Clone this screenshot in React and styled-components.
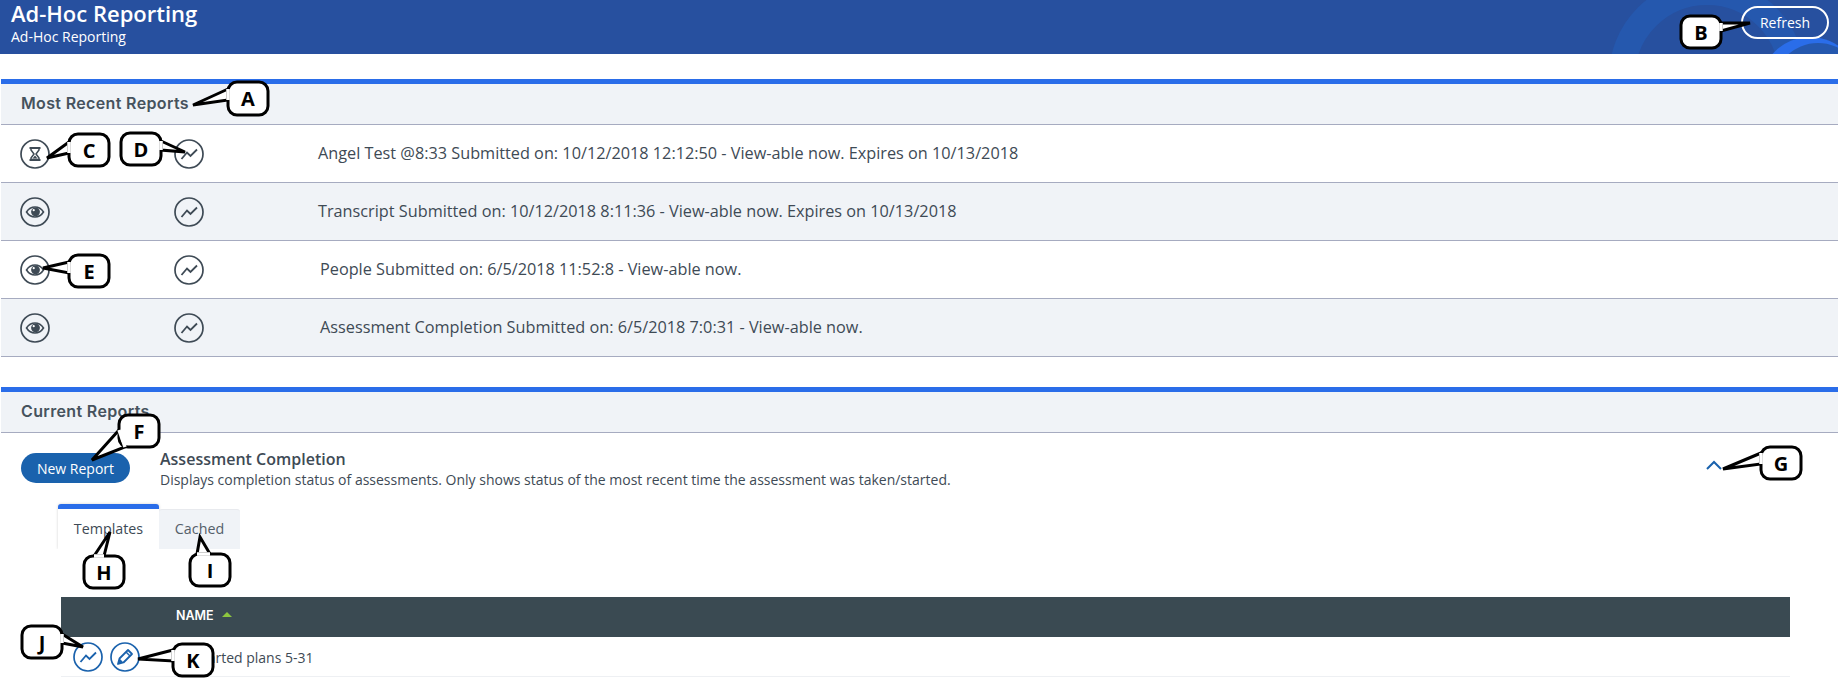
import styled, { createGlobalStyle } from "styled-components";

const GlobalStyle = createGlobalStyle`
  html, body {
    margin: 0;
    padding: 0;
    background: #fff;
    font-family: "Open Sans", "Liberation Sans", sans-serif;
    color: #3e4a55;
    overflow: hidden;
  }
  * { box-sizing: border-box; }
`;

const recent = [
  { id: 1, pending: true, text: "Angel Test @8:33 Submitted on: 10/12/2018 12:12:50 - View-able now. Expires on 10/13/2018" },
  { id: 2, text: "Transcript Submitted on: 10/12/2018 8:11:36 - View-able now. Expires on 10/13/2018" },
  { id: 3, inset: true, text: "People Submitted on: 6/5/2018 11:52:8 - View-able now." },
  { id: 4, inset: true, text: "Assessment Completion Submitted on: 6/5/2018 7:0:31 - View-able now." },
];

// x, y, w, h = bubble, tip = end of the pointer, base = where it leaves the bubble
const callouts = [
  { l: "A", x: 228, y: 82, w: 40, h: 33, tip: [193, 105], base: [[228, 89], [228, 100]] },
  { l: "B", x: 1681, y: 16, w: 40, h: 32, tip: [1750, 23], base: [[1721, 23], [1721, 31]] },
  { l: "C", x: 69, y: 134, w: 40, h: 32, tip: [47, 158], base: [[69, 142], [69, 153]] },
  { l: "D", x: 121, y: 133, w: 40, h: 32, tip: [185, 152], base: [[161, 141], [161, 150]] },
  { l: "E", x: 69, y: 255, w: 40, h: 32, tip: [43, 268], base: [[69, 262], [69, 273]] },
  { l: "F", x: 119, y: 415, w: 40, h: 32, tip: [92, 460], base: [[119, 430], [125, 447]] },
  { l: "G", x: 1761, y: 447, w: 40, h: 32, tip: [1723, 469], base: [[1761, 453], [1761, 464]] },
  { l: "H", x: 84, y: 556, w: 40, h: 32, tip: [110, 532], base: [[94, 556], [104, 556]] },
  { l: "I", x: 190, y: 554, w: 40, h: 32, tip: [200, 537], base: [[197, 554], [210, 554]] },
  { l: "J", x: 22, y: 626, w: 40, h: 32, tip: [83, 647], base: [[62, 634], [62, 643]] },
  { l: "K", x: 173, y: 644, w: 40, h: 32, tip: [138, 659], base: [[173, 650], [173, 661]] },
];

function Ring() {
  return <circle cx="15" cy="15" r="14" fill="none" stroke="currentColor" strokeWidth="1.7" />;
}

function HourglassIcon() {
  return (
    <svg viewBox="0 0 30 30" width="30" height="30">
      <Ring />
      <path d="M9.500 9h11M9.500 21h11" stroke="currentColor" strokeWidth="2" />
      <path d="M11 9.500v1.500l3 4-3 4v1.500h8V19l-3-4 3-4V9.500" fill="none" stroke="currentColor" strokeWidth="1.500" />
      <path d="M12.500 19.500l2.500-3 2.500 3z" fill="currentColor" />
    </svg>
  );
}

function EyeIcon() {
  return (
    <svg viewBox="0 0 30 30" width="30" height="30">
      <Ring />
      <path d="M6.500 15c2.200-3.400 5-5 8.500-5s6.300 1.600 8.500 5c-2.200 3.400-5 5-8.500 5s-6.300-1.600-8.500-5z" fill="none" stroke="currentColor" strokeWidth="1.600" />
      <circle cx="15.500" cy="14.800" r="4.400" fill="currentColor" />
      <circle cx="13.700" cy="13.200" r="1.100" fill="#fff" />
    </svg>
  );
}

function ChartIcon() {
  return (
    <svg viewBox="0 0 30 30" width="30" height="30">
      <Ring />
      <path d="M7.500 20l5.500-6.500 3.500 3.500 6.500-6.500" fill="none" stroke="currentColor" strokeWidth="1.800" />
    </svg>
  );
}

function PencilIcon() {
  return (
    <svg viewBox="0 0 30 30" width="30" height="30">
      <Ring />
      <path d="M8 22l1.500-5.500 8.500-8.500 4 4-8.500 8.500z" fill="none" stroke="currentColor" strokeWidth="1.800" strokeLinejoin="round" />
      <path d="M8 22l1.500-5.500 4 4z" fill="currentColor" />
      <path d="M16 10l4 4" stroke="currentColor" strokeWidth="1.500" />
    </svg>
  );
}

function Callout({ l, x, y, w, h, tip, base }) {
  const pad = 3;
  const px = (v) => v - x + pad;
  const py = (v) => v - y + pad;
  const pts = `${px(base[0][0])},${py(base[0][1])} ${px(tip[0])},${py(tip[1])} ${px(base[1][0])},${py(base[1][1])}`;
  return (
    <Bubble $x={x - pad} $y={y - pad} $w={w + pad * 2} $h={h + pad * 2}>
      <svg width={w + pad * 2} height={h + pad * 2}>
        <polygon points={pts} fill="#fff" stroke="#000" strokeWidth="3" strokeLinejoin="miter" />
        <rect x={pad} y={pad} width={w} height={h} rx="9" fill="#fff" stroke="#000" strokeWidth="3" />
        <line x1={px(base[0][0])} y1={py(base[0][1])} x2={px(base[1][0])} y2={py(base[1][1])} stroke="#fff" strokeWidth="3.500" />
      </svg>
      <BubbleLetter>{l}</BubbleLetter>
    </Bubble>
  );
}

export default function App() {
  return (
    <Page>
      <GlobalStyle />
      <Banner>
        <Rings viewBox="0 0 248 54" width="248" height="54">
          <circle cx="117" cy="77" r="85" fill="none" stroke="#2558ae" strokeWidth="26" />
          <circle cx="220" cy="87" r="50" fill="#2a6de9" />
          <circle cx="228" cy="88" r="45" fill="#2558ae" />
        </Rings>
        <BannerText>
          <BannerTitle>Ad-Hoc Reporting</BannerTitle>
          <BannerSub>Ad-Hoc Reporting</BannerSub>
        </BannerText>
        <RefreshButton>Refresh</RefreshButton>
      </Banner>

      <Section $top={25}>
        <SectionHead>Most Recent Reports</SectionHead>
        {recent.map((r) => (
          <ReportRow key={r.id}>
            <IconCell>{r.pending ? <HourglassIcon /> : <EyeIcon />}</IconCell>
            <IconCell><ChartIcon /></IconCell>
            <ReportText $inset={r.inset}>{r.text}</ReportText>
          </ReportRow>
        ))}
      </Section>

      <Section $top={30}>
        <SectionHead>Current Reports</SectionHead>
        <ReportBar>
          <NewReport>New Report</NewReport>
          <ReportInfo>
            <ReportName>Assessment Completion</ReportName>
            <ReportDesc>
              Displays completion status of assessments. Only shows status of the most recent time the assessment was taken/started.
            </ReportDesc>
          </ReportInfo>
          <Collapse viewBox="0 0 16 10" width="16" height="10">
            <path d="M1 9l7-7 7 7" fill="none" stroke="#1a62ad" strokeWidth="2" />
          </Collapse>
        </ReportBar>
        <Tabs>
          <Tab $active>Templates</Tab>
          <Tab>Cached</Tab>
        </Tabs>
        <TableWrap>
          <TableHead>
            <NameHead>NAME</NameHead>
            <SortArrow />
          </TableHead>
          <TableRow>
            <RowActions>
              <ChartIcon />
              <PencilIcon />
            </RowActions>
            <RowName>Started plans 5-31</RowName>
          </TableRow>
        </TableWrap>
      </Section>

      {callouts.map((c) => (
        <Callout key={c.l} {...c} />
      ))}
    </Page>
  );
}

const Page = styled.div`
  position: relative;
  width: 1838px;
  height: 678px;
  overflow: hidden;
  background: #fff;
`;

const Banner = styled.header`
  position: relative;
  height: 54px;
  background: #27509f;
  display: flex;
  align-items: flex-start;
  justify-content: space-between;
  padding: 0 9px 0 11px;
  color: #fff;
`;

const Rings = styled.svg`
  position: absolute;
  right: 0;
  top: 0;
`;

const BannerText = styled.div`
  position: relative;
`;

const BannerTitle = styled.div`
  font-size: 22px;
  font-weight: 600;
  line-height: 26px;
`;

const BannerSub = styled.div`
  font-size: 14px;
  line-height: 20px;
  margin-top: 1px;
`;

const RefreshButton = styled.button`
  position: relative;
  width: 88px;
  height: 33px;
  margin-top: 6px;
  border: 2px solid #fff;
  border-radius: 17px;
  background: transparent;
  color: #fff;
  font-family: inherit;
  font-size: 14px;
  padding: 0;
`;

const Section = styled.section`
  margin: ${(p) => p.$top}px 0 0 1px;
`;

const SectionHead = styled.h2`
  margin: 0;
  height: 46px;
  padding: 0 20px 2px;
  display: flex;
  align-items: center;
  background: #f0f3f7;
  border-top: 5px solid #2a6de9;
  border-bottom: 1px solid #a6abc0;
  font-family: "Inter", "Liberation Sans", sans-serif;
  font-size: 16px;
  font-weight: 600;
  letter-spacing: 0.35px;
  color: #46525d;
`;

const ReportRow = styled.div`
  display: grid;
  grid-template-columns: 154px 144px 1fr;
  align-items: center;
  height: 58px;
  padding-left: 19px;
  border-bottom: 1px solid #a6abc0;
  background: #fff;
  &:nth-child(odd) {
    background: #f0f3f7;
  }
`;

const IconCell = styled.div`
  display: flex;
  color: #3e4a55;
`;

const ReportText = styled.div`
  font-size: 16.25px;
  margin-top: -2px;
  padding-left: ${(p) => (p.$inset ? 2 : 0)}px;
`;

const ReportBar = styled.div`
  display: flex;
  align-items: flex-start;
  height: 71px;
  padding: 20px 116px 0 20px;
`;

const NewReport = styled.button`
  width: 109px;
  height: 30px;
  border: 0;
  border-radius: 15px;
  background: #1a62ad;
  color: #fff;
  font-family: inherit;
  font-size: 14px;
  padding: 0;
`;

const ReportInfo = styled.div`
  flex: 1;
  margin-left: 30px;
`;

const ReportName = styled.div`
  font-size: 16px;
  font-weight: 600;
  line-height: 20px;
  margin-top: -4px;
`;

const ReportDesc = styled.div`
  font-size: 14px;
  line-height: 19px;
  margin-top: 1px;
`;

const Collapse = styled.svg`
  margin-top: 7px;
`;

const Tabs = styled.div`
  display: flex;
  align-items: flex-end;
  height: 45px;
  padding-left: 57px;
`;

const Tab = styled.div`
  display: flex;
  align-items: center;
  justify-content: center;
  width: ${(p) => (p.$active ? 101 : 81)}px;
  height: ${(p) => (p.$active ? 45 : 40)}px;
  padding-bottom: 2px;
  background: ${(p) => (p.$active ? "#fff" : "#f0f3f7")};
  border-top: ${(p) => (p.$active ? "5px solid #2a6de9" : "1px solid #e8eaee")};
  border-radius: 3px 3px 0 0;
  box-shadow: ${(p) => (p.$active ? "0 0 3px rgba(0,0,0,0.18)" : "none")};
  clip-path: inset(-4px -4px 0 -4px);
  font-size: 14.3px;
  color: ${(p) => (p.$active ? "#3e4a55" : "#55606a")};
`;

const TableWrap = styled.div`
  margin: 48px 0 0 60px;
  width: 1729px;
`;

const TableHead = styled.div`
  display: flex;
  align-items: center;
  height: 40px;
  padding: 0 0 3px 115px;
  background: #3a4a52;
`;

const NameHead = styled.span`
  font-family: "Inter", "Liberation Sans", sans-serif;
  font-size: 12.5px;
  font-weight: 600;
  color: #fff;
`;

const SortArrow = styled.span`
  width: 0;
  height: 0;
  margin: 0 0 3px 8px;
  border-left: 5px solid transparent;
  border-right: 5px solid transparent;
  border-bottom: 5px solid #8dc63f;
`;

const TableRow = styled.div`
  display: flex;
  align-items: center;
  height: 40px;
  border-bottom: 1px solid #eef0f3;
`;

const RowActions = styled.div`
  display: flex;
  gap: 7px;
  width: 134px;
  padding-left: 12px;
  color: #1a62ad;
`;

const RowName = styled.div`
  font-size: 14px;
  margin-top: 1px;
`;

const Bubble = styled.div.attrs((p) => ({
  style: { left: p.$x, top: p.$y, width: p.$w, height: p.$h },
}))`
  position: absolute;
  display: flex;
  align-items: center;
  justify-content: center;
  svg {
    position: absolute;
    left: 0;
    top: 0;
    overflow: visible;
  }
`;

const BubbleLetter = styled.span`
  position: relative;
  font-size: 20px;
  font-weight: 700;
  color: #000;
`;
